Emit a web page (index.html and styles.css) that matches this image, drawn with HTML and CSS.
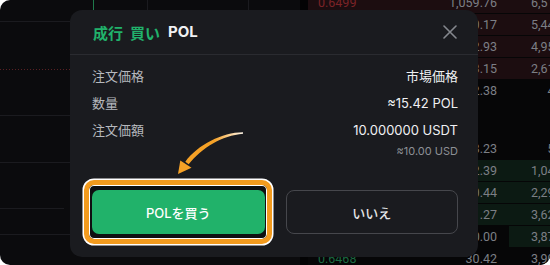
FILE: index.html
```html
<!DOCTYPE html>
<html lang="ja">
<head>
<meta charset="utf-8">
<title>成行 買い POL</title>
<link rel="stylesheet" href="styles.css">
</head>
<body>
<div class="screen">
  <div class="chart">
    <svg width="300" height="265" viewBox="0 0 300 265">
      <line x1="0" y1="21.5" x2="300" y2="21.5" class="grid"/>
      <line x1="0" y1="69.5" x2="300" y2="69.5" class="dotted"/>
      <line x1="0" y1="115.5" x2="300" y2="115.5" class="grid"/>
      <line x1="0" y1="162.5" x2="300" y2="162.5" class="grid"/>
      <line x1="0" y1="208.5" x2="64" y2="208.5" class="grid"/>
      <line x1="0" y1="234.5" x2="300" y2="234.5" class="grid"/>
      <line x1="93.5" y1="0" x2="93.5" y2="12" class="wick"/>
      <line x1="147.5" y1="0" x2="147.5" y2="12" class="grid"/>
      <line x1="248.5" y1="0" x2="248.5" y2="12" class="grid"/>
    </svg>
  </div>
  <div class="book">
    <div class="row ask first" style="--d:100%"><span class="p red">0.6499</span><span class="a">1,059.76</span><span class="t">6,512.34</span></div>
    <div class="row ask" style="--d:100%"><span class="p red"></span><span class="a">2,390.17</span><span class="t">5,441.28</span></div>
    <div class="row ask" style="--d:100%"><span class="p red"></span><span class="a">1,242.93</span><span class="t">4,953.11</span></div>
    <div class="row ask" style="--d:100%"><span class="p red"></span><span class="a">2,343.15</span><span class="t">2,617.40</span></div>
    <div class="row" style="--d:0%"><span class="p red"></span><span class="a">42.38</span><span class="t">43.52</span></div>
    <div class="mid"></div>
    <div class="row" style="--d:0%"><span class="p green"></span><span class="a">58.23</span><span class="t">58.69</span></div>
    <div class="row bid" style="--d:100%"><span class="p green"></span><span class="a">1,172.39</span><span class="t">1,046.72</span></div>
    <div class="row bid" style="--d:100%"><span class="p green"></span><span class="a">1,120.44</span><span class="t">2,293.16</span></div>
    <div class="row bid" style="--d:100%"><span class="p green"></span><span class="a">1,331.27</span><span class="t">3,624.43</span></div>
    <div class="row bid" style="--d:17%"><span class="p green"></span><span class="a">250.00</span><span class="t">3,874.43</span></div>
    <div class="row" style="--d:0%"><span class="p green">0.6468</span><span class="a">30.42</span><span class="t">3,904.85</span></div>
  </div>

  <div class="modal">
    <div class="m-head">
      <div class="m-title"><span class="g">成行</span><span class="g">買い</span><span class="w">POL</span></div>
      <button class="close" aria-label="閉じる">
        <svg width="14" height="14" viewBox="0 0 14 14"><path d="M1 1L13 13M13 1L1 13" stroke="#85888e" stroke-width="1.6" stroke-linecap="round" fill="none"/></svg>
      </button>
    </div>
    <div class="m-body">
      <div class="line"><span class="lbl">注文価格</span><span class="val">市場価格</span></div>
      <div class="line"><span class="lbl">数量</span><span class="val">≈15.42 POL</span></div>
      <div class="line"><span class="lbl">注文価額</span><span class="val">10.000000 USDT</span></div>
      <div class="sub">≈10.00 USD</div>
    </div>
    <div class="m-foot">
      <div class="hl"><button class="btn buy">POLを買う</button></div>
      <button class="btn no">いいえ</button>
    </div>
    <svg class="arrow" width="80" height="65" viewBox="170 125 80 65">
      <defs>
        <linearGradient id="ag" gradientUnits="userSpaceOnUse" x1="243" y1="133" x2="214" y2="141">
          <stop offset="0" stop-color="#fff6e8"/>
          <stop offset="1" stop-color="#f5a126"/>
        </linearGradient>
      </defs>
      <path d="M243 132.2C222 132.4 198 144.6 185.3 161.7L188.7 164.3C202 147.6 222 135.6 243 133.8Z" fill="url(#ag)"/>
      <path d="M178 174L180.3 160.5L191.5 167.8Z" fill="#f5a126"/>
    </svg>
  </div>
</div>
</body>
</html>
```

FILE: styles.css
```css
body {
  margin: 0;
  background: #ffffff;
}

.screen {
  width: 550px;
  height: 265px;
  border-radius: 10px 0 10px 10px;
  overflow: hidden;
  position: relative;
  display: flex;
  background: #0b0b0d;
  font-family: "Inter", "Noto Sans CJK JP", sans-serif;
}

.chart {
  width: 300px;
  flex: none;
}

.chart svg {
  display: block;
}

.grid {
  stroke: #1b1b1f;
  stroke-width: 1;
}

.dotted {
  stroke: #5a2023;
  stroke-width: 1;
  stroke-dasharray: 1 2;
}

.wick {
  stroke: #1f7a4b;
  stroke-width: 1;
}

.book {
  flex: 1;
  min-width: 0;
  border-left: 8px solid #030304;
  background: #060607;
  display: flex;
  flex-direction: column;
  gap: 1px;
  overflow: hidden;
  font-family: Roboto, "Noto Sans", sans-serif;
  font-size: 12.5px;
  color: #7c7f85;
}

.row {
  flex: none;
  height: 21px;
  display: grid;
  grid-template-columns: 100px 79px 82px;
  padding-left: 10px;
  align-items: center;
  white-space: nowrap;
}

.row.first {
  margin-top: -8px;
}

.row .a,
.row .t {
  text-align: right;
}

.ask {
  background: linear-gradient(to left, #1c0d10 var(--d), transparent var(--d));
}

.bid {
  background: linear-gradient(to left, #0c1a13 var(--d), transparent var(--d));
}

.mid {
  flex: none;
  height: 35px;
}

.p.red {
  color: #7b2327;
}

.p.green {
  color: #1b6a42;
}

/* modal */
.modal {
  position: absolute;
  left: 70px;
  top: 10px;
  width: 408px;
  height: 247px;
  background: #1a1b1f;
  border-radius: 12px;
  color: #eceef0;
}

.m-head {
  height: 44px;
  display: flex;
  align-items: center;
  justify-content: space-between;
  padding: 0 21px 0 23px;
  border-bottom: 1px solid #2a2b30;
}

.m-title {
  display: flex;
  gap: 7px;
  font-size: 15px;
  font-weight: 700;
}

.m-title .g {
  color: #21b26b;
}

.m-title .w {
  color: #f0f1f3;
  margin-left: 1px;
}

.close {
  width: 14px;
  height: 14px;
  padding: 0;
  border: 0;
  background: none;
  display: flex;
}

.m-body {
  padding: 7px 20px 0 22px;
}

.line {
  display: flex;
  justify-content: space-between;
  align-items: center;
  height: 27px;
  font-size: 13px;
}

.lbl {
  color: #b5b8bd;
}

.val {
  color: #f0f1f3;
}

.sub {
  text-align: right;
  font-size: 11px;
  line-height: 14px;
  margin-top: 1px;
  color: #8d9096;
}

.m-foot {
  display: grid;
  grid-template-columns: 1fr 1fr;
  gap: 21px;
  padding: 0 20px 0 22px;
  margin-top: 32px;
}

.hl {
  position: relative;
  display: flex;
  min-width: 0;
}

.hl::before {
  content: "";
  position: absolute;
  left: -8.5px;
  top: -10.5px;
  right: -7.5px;
  bottom: -9.5px;
  border: 5.5px solid #f39b1e;
  border-radius: 10px;
  box-shadow: 0 0 0 1.5px #ffffff, inset 0 0 0 1px #ffffff;
  background: #0f1012;
}

.btn {
  box-sizing: border-box;
  width: 100%;
  height: 44px;
  padding: 0;
  border-radius: 7px;
  font-family: "Inter", "Noto Sans CJK JP", sans-serif;
  font-size: 13px;
  font-weight: 500;
  cursor: pointer;
}

.buy {
  position: relative;
  background: #21b26a;
  color: #ffffff;
  border: 0;
}

.no {
  background: transparent;
  border: 1.5px solid #46474c;
  border-radius: 8px;
  color: #e6e7e9;
}

.arrow {
  position: absolute;
  left: 100px;
  top: 115px;
}
```
